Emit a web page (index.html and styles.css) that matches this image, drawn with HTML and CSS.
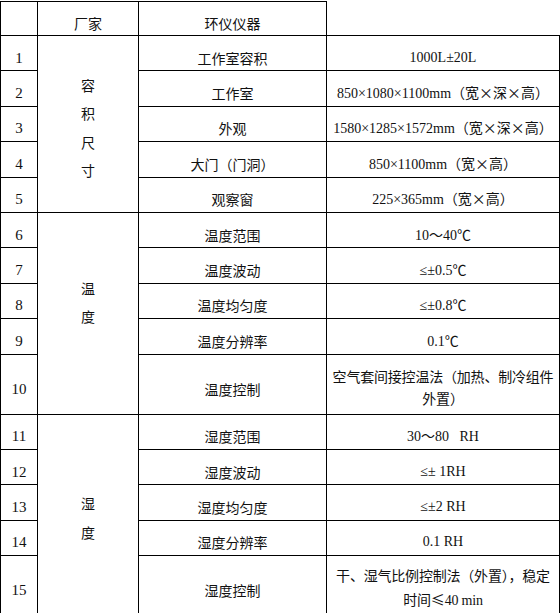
FILE: index.html
```html
<!DOCTYPE html>
<html lang="zh-CN">
<head>
<meta charset="utf-8">
<title>环仪仪器</title>
<link rel="stylesheet" href="styles.css">
</head>
<body>
<table class="spec">
  <colgroup>
    <col class="c-no">
    <col class="c-group">
    <col class="c-item">
    <col class="c-value">
  </colgroup>
  <tr class="head">
    <td></td>
    <td class="cjk">厂家</td>
    <td class="cjk">环仪仪器</td>
    <td class="blank"></td>
  </tr>
  <tr>
    <td class="no">1</td>
    <td class="group g1 cjk" rowspan="5">容<br>积<br>尺<br>寸</td>
    <td class="cjk">工作室容积</td>
    <td class="val">1000L±20L</td>
  </tr>
  <tr>
    <td class="no">2</td>
    <td class="cjk">工作室</td>
    <td class="val">850×1080×1100mm<span class="cjk">（宽×深×高）</span></td>
  </tr>
  <tr>
    <td class="no">3</td>
    <td class="cjk">外观</td>
    <td class="val">1580×1285×1572mm<span class="cjk">（宽×深×高）</span></td>
  </tr>
  <tr>
    <td class="no">4</td>
    <td class="cjk">大门（门洞）</td>
    <td class="val">850×1100mm<span class="cjk">（宽×高）</span></td>
  </tr>
  <tr>
    <td class="no">5</td>
    <td class="cjk">观察窗</td>
    <td class="val">225×365mm<span class="cjk">（宽×高）</span></td>
  </tr>
  <tr>
    <td class="no">6</td>
    <td class="group g2 cjk" rowspan="5">温<br>度</td>
    <td class="cjk">温度范围</td>
    <td class="val">10<span class="cjk">～</span>40<span class="cjk">℃</span></td>
  </tr>
  <tr>
    <td class="no">7</td>
    <td class="cjk">温度波动</td>
    <td class="val">≤±0.5<span class="cjk">℃</span></td>
  </tr>
  <tr>
    <td class="no">8</td>
    <td class="cjk">温度均匀度</td>
    <td class="val">≤±0.8<span class="cjk">℃</span></td>
  </tr>
  <tr>
    <td class="no">9</td>
    <td class="cjk">温度分辨率</td>
    <td class="val">0.1<span class="cjk">℃</span></td>
  </tr>
  <tr class="tall">
    <td class="no">10</td>
    <td class="cjk">温度控制</td>
    <td class="val two cjk">空气套间接控温法（加热、制冷组件<br>外置）</td>
  </tr>
  <tr>
    <td class="no">11</td>
    <td class="group g3 cjk" rowspan="5">湿<br>度</td>
    <td class="cjk">湿度范围</td>
    <td class="val">30<span class="cjk">～</span>80&nbsp;&nbsp; RH</td>
  </tr>
  <tr>
    <td class="no">12</td>
    <td class="cjk">湿度波动</td>
    <td class="val">≤± 1RH</td>
  </tr>
  <tr>
    <td class="no">13</td>
    <td class="cjk">湿度均匀度</td>
    <td class="val">≤±2 RH</td>
  </tr>
  <tr>
    <td class="no">14</td>
    <td class="cjk">湿度分辨率</td>
    <td class="val">0.1 RH</td>
  </tr>
  <tr class="tall">
    <td class="no">15</td>
    <td class="cjk">湿度控制</td>
    <td class="val two"><span class="cjk">干、湿气比例控制法（外置），稳定</span><br><span class="cjk">时间≤</span>40 min</td>
  </tr>
</table>
</body>
</html>
```
FILE: styles.css
```css
html, body {
  margin: 0;
  padding: 0;
  background: #ffffff;
}

body {
  padding-top: 1px;
  font-family: "Liberation Serif", "Noto Sans CJK SC", serif;
  font-size: 14px;
  color: #111111;
}

.spec {
  border-collapse: collapse;
  table-layout: fixed;
  width: 559px;
}

.c-no { width: 37px; }
.c-group { width: 101px; }
.c-item { width: 188px; }
.c-value { width: 233px; }

.spec td {
  border: 1px solid #000000;
  text-align: center;
  vertical-align: middle;
  padding: 9px 2px 0 2px;
  line-height: 20px;
  white-space: nowrap;
}

.spec tr { height: 35.4px; }
.spec tr.head { height: 34px; }
.spec tr.tall { height: 60px; }

.spec td.blank {
  border-top: none;
  border-right: none;
}

.cjk {
  font-family: "Noto Sans CJK SC", "Liberation Sans", sans-serif;
}

.spec td.no {
  font-size: 15px;
}

.spec td.group {
  line-height: 28.5px;
}

.spec td.g1 {
  padding-top: 8px;
}

.spec td.g2 {
  padding-top: 0;
  padding-bottom: 22px;
}

.spec td.g3 {
  padding-top: 6px;
  padding-bottom: 0;
}

.spec td.two {
  line-height: 22px;
  padding-top: 5px;
  letter-spacing: -0.2px;
}
```
